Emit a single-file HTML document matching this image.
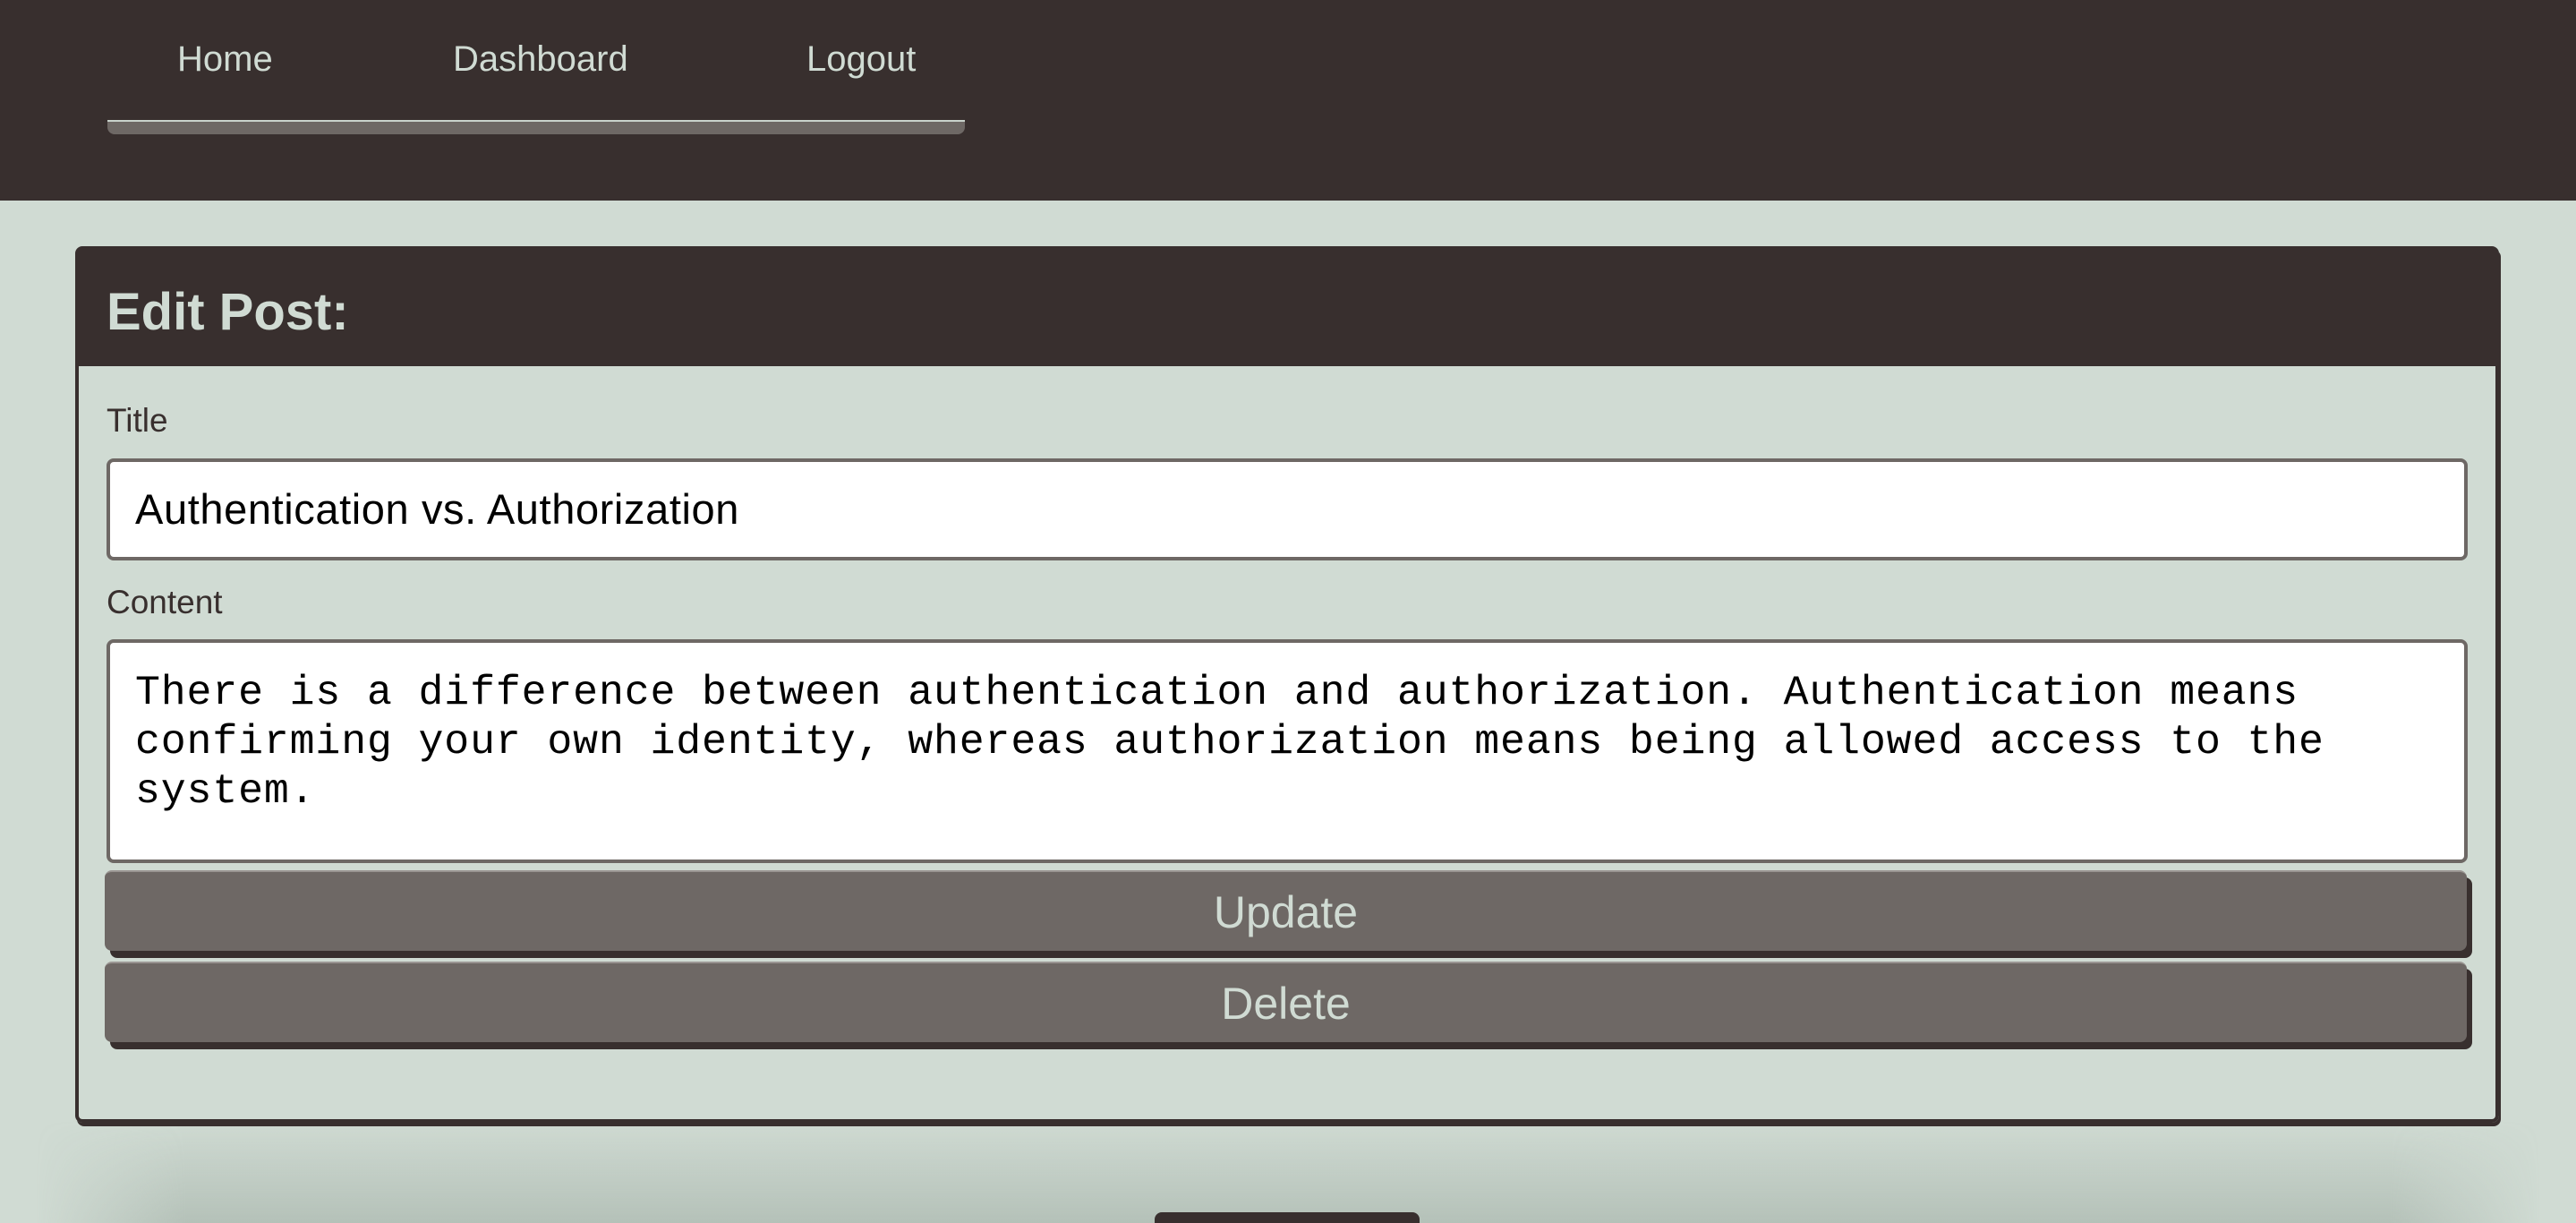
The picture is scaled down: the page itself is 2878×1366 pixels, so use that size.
<!DOCTYPE html>
<html><head><style>
*{margin:0;padding:0;box-sizing:border-box}
html,body{width:2878px;height:1366px;overflow:hidden;background:#d0dbd3;font-family:"Liberation Sans",sans-serif;position:relative}
.nav{position:absolute;left:0;top:0;width:2878px;height:224px;background:#382f2e;z-index:2}
.nav span{position:absolute;top:40px;font-size:40px;color:#d0dbd3;line-height:52px}
.bar{position:absolute;background:#6e6865;border-top:2px solid #c8d2cb;border-radius:0 0 8px 8px}
.card{position:absolute;left:84px;top:275px;width:2708px;height:979px;border:4px solid #382f2e;border-radius:8px;box-shadow:2px 4px 0 #382f2e;z-index:2}
.hd{position:absolute;left:0;top:0;right:0;height:130px;background:#382f2e}
.hd h1{position:absolute;left:31px;top:40px;font-size:58px;color:#d0dbd3;font-weight:bold;line-height:60px}
.lbl{position:absolute;left:31px;font-size:37px;color:#382f2e}
.box{position:absolute;left:31px;width:2638px;background:#fff;border:4px solid #6e6865;border-radius:8px}
.btn{position:absolute;left:29px;width:2639px;height:90px;background:#6e6865;border-radius:8px;box-shadow:6px 8px 0 #382f2e;color:#d0dbd3;font-size:50px;text-align:center;line-height:90px;border-top:2px solid #9a9592}
.shade{position:absolute;left:40px;top:1250px;width:2798px;height:116px;background:linear-gradient(to bottom,rgba(140,155,145,0),rgba(140,155,145,.4));-webkit-mask-image:linear-gradient(to right,transparent,#000 6%,#000 94%,transparent);mask-image:linear-gradient(to right,transparent,#000 6%,#000 94%,transparent);z-index:1}
</style></head><body>
<div class="nav">
<span style="left:198px">Home</span>
<span style="left:506px">Dashboard</span>
<span style="left:901px">Logout</span>
<div class="bar" style="left:120px;width:958px;top:134px;height:16px"></div>
</div>
<div class="card">
<div class="hd"><h1>Edit Post:</h1></div>
<div class="lbl" style="top:170px">Title</div>
<div class="box" style="top:233px;height:114px;font-size:47px;letter-spacing:0.6px;line-height:106px;padding-left:28px;color:#000">Authentication vs. Authorization</div>
<div class="lbl" style="top:373px">Content</div>
<div class="box" style="top:435px;height:250px;font-family:'Liberation Mono',monospace;font-size:46.5px;letter-spacing:0.87px;line-height:55px;padding:28px 0 0 28px;color:#000;white-space:pre">There is a difference between authentication and authorization. Authentication means
confirming your own identity, whereas authorization means being allowed access to the
system.</div>
<div class="btn" style="top:693px">Update</div>
<div class="btn" style="top:795px">Delete</div>
</div>
<div class="shade"></div>
<div style="position:absolute;left:1290px;top:1354px;width:296px;height:12px;background:#382f2e;border-radius:8px 8px 0 0;z-index:3"></div>
</body></html>
